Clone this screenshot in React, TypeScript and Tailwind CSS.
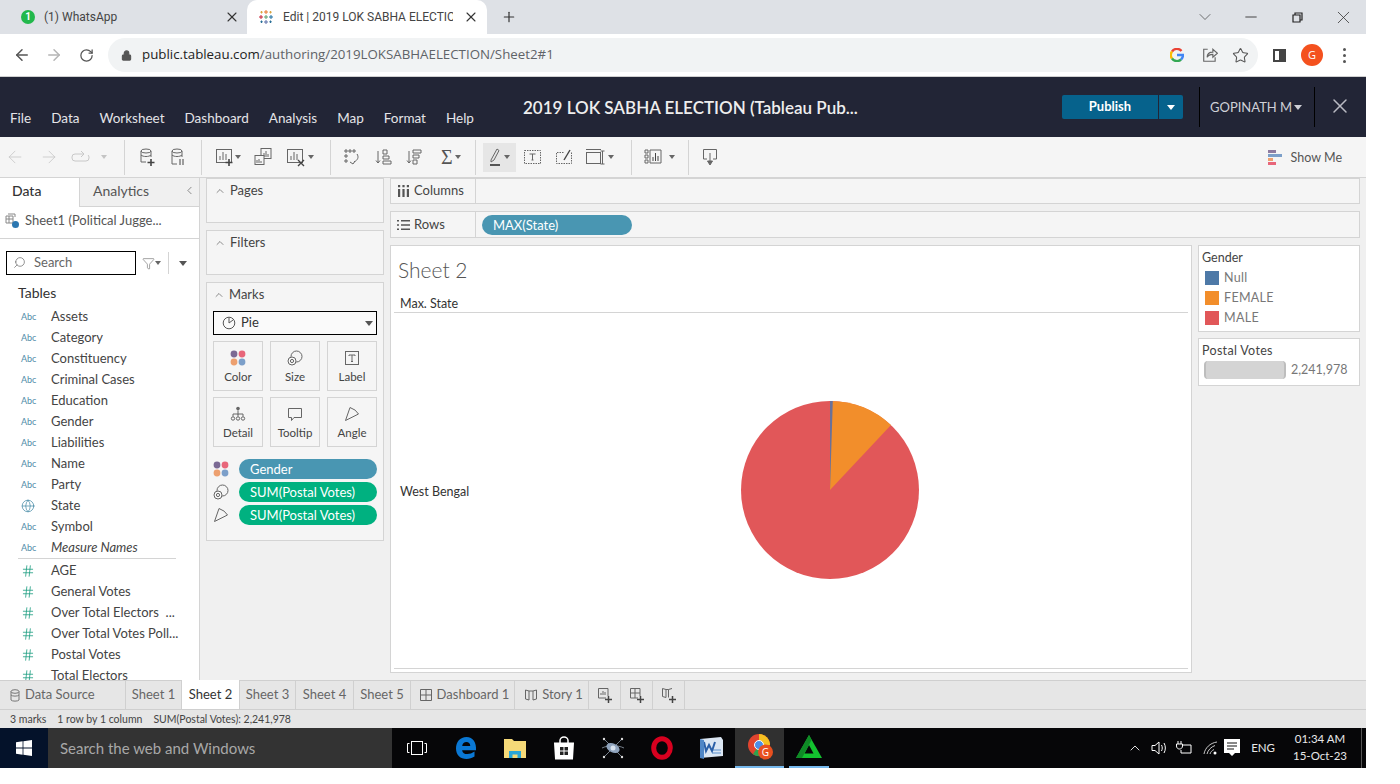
import React from "react";
import { ArrowLeft, ArrowRight, RotateCw, Lock, Plus, X, ChevronDown, Minus, Star, ChevronUp, ChevronLeft, Search, Filter, Globe, Hash } from "lucide-react";

const dims = ["Assets", "Category", "Constituency", "Criminal Cases", "Education", "Gender", "Liabilities", "Name", "Party", "State", "Symbol", "Measure Names"];
const measures = ["AGE", "General Votes", "Over Total Electors  ...", "Over Total Votes Poll...", "Postal Votes", "Total Electors"];
const menus = ["File", "Data", "Worksheet", "Dashboard", "Analysis", "Map", "Format", "Help"];

const Caret = ({ className = "" }: { className?: string }) => (
  <span className={`inline-block w-0 h-0 border-x-[3px] border-x-transparent border-t-[4px] border-t-[#666] ${className}`} />
);

const Sep = () => <div className="w-px h-[35px] bg-[#d4d4d4]" />;

const Dots = () => (
  <svg width="16" height="16" viewBox="0 0 16 16">
    <circle cx="4" cy="4" r="3.4" fill="#7b6a94" />
    <circle cx="12" cy="4" r="3.4" fill="#e8667a" />
    <circle cx="4" cy="12" r="3.4" fill="#eda06f" />
    <circle cx="12" cy="12" r="3.4" fill="#7c9fc9" />
  </svg>
);

const SizeIcon = () => (
  <svg width="16" height="16" viewBox="0 0 16 16" fill="none" stroke="#666" strokeWidth="1">
    <circle cx="9.5" cy="6.5" r="5.5" />
    <circle cx="5" cy="11" r="4" fill="#fafafa" />
    <circle cx="5" cy="11" r="1.6" />
  </svg>
);

const LabelIcon = () => (
  <svg width="16" height="16" viewBox="0 0 16 16" fill="none" stroke="#666">
    <rect x="1.5" y="1.5" width="13" height="13" />
    <path d="M5 5h6M8 5v6.5M7 11.5h2M5 5v1M11 5v1" />
  </svg>
);

const DetailIcon = () => (
  <svg width="16" height="16" viewBox="0 0 16 16" fill="none" stroke="#666">
    <circle cx="8" cy="2.6" r="1.8" fill="#666" stroke="none" />
    <path d="M8 4.5v4M3 10.5V8h10v2.5M8 8v2.5" />
    <circle cx="3" cy="12.5" r="1.7" />
    <circle cx="8" cy="12.5" r="1.7" />
    <circle cx="13" cy="12.5" r="1.7" />
  </svg>
);

const TooltipIcon = () => (
  <svg width="16" height="16" viewBox="0 0 16 16" fill="none" stroke="#666">
    <path d="M1.5 2.5h13v9H7L4.5 14.5v-3h-3z" />
  </svg>
);

const AngleIcon = () => (
  <svg width="16" height="16" viewBox="0 0 16 16" fill="none" stroke="#666">
    <path d="M1.5 14.5 6 1.5Q12 3.5 14.5 8Z" />
  </svg>
);

const PieIcon = () => (
  <svg width="14" height="14" viewBox="0 0 14 14" fill="none" stroke="#555">
    <circle cx="7" cy="7" r="5.8" />
    <path d="M7 7V1.5M7 7l4-3" />
  </svg>
);

// toolbar drawings, all on a 20px box
const T = ({ children, w = 20 }: { children: React.ReactNode; w?: number }) => (
  <svg width={w} height="20" viewBox={`0 0 ${w} 20`} fill="none" stroke="#666" strokeWidth="1">
    {children}
  </svg>
);

const Toolbar = () => (
  <div className="h-[40px] bg-[#f5f5f5] flex items-center text-[#666] shrink-0">
    <div className="w-[124px] flex items-center pl-[5px] text-[#c8c8c8]">
      <ArrowLeft size={20} strokeWidth={1} />
      <ArrowRight size={20} strokeWidth={1} className="ml-[14px]" />
      <svg width="20" height="14" viewBox="0 0 20 14" fill="none" stroke="#c8c8c8" className="ml-[12px]">
        <path d="M13 4H4a3 3 0 0 0-3 3v1a3 3 0 0 0 3 3h11a3 3 0 0 0 3-3V7a3 3 0 0 0-1-2M10 1l3 3-3 3" />
      </svg>
      <Caret className="ml-[10px] border-t-[#c4c4c4]" />
    </div>
    <Sep />
    <div className="w-[76px] flex items-center pl-[12px] gap-[11px]">
      <T>
        <ellipse cx="9" cy="4" rx="5" ry="2" />
        <path d="M4 4v11h5M14 4v6M4 8c2 2 8 2 10 0" />
        <path d="M14 12v7M10.5 15.5h7" stroke="#444" strokeWidth="1.6" />
      </T>
      <T>
        <ellipse cx="9" cy="4" rx="5" ry="2" />
        <path d="M4 4v13h5M14 4v6M4 8c2 2 8 2 10 0" />
        <path d="M12 12v6M15 12v6" stroke="#444" />
      </T>
    </div>
    <Sep />
    <div className="w-[128px] flex items-center pl-[13px]">
      <T>
        <rect x="1.5" y="2.5" width="15" height="13" />
        <path d="M5 13V9M8 13V5M11 13V7" />
        <path d="M14 12v7M10.5 15.5h7" stroke="#444" strokeWidth="1.6" />
      </T>
      <Caret />
      <span className="ml-[12px]" />
      <T>
        <rect x="8" y="1.5" width="10" height="10" />
        <path d="M11 10V6M13 10V4M15 10V7" />
        <rect x="2" y="8.5" width="9" height="9" fill="#f5f5f5" />
        <path d="M4 16v-3M6 16v-4M8 16v-2" />
      </T>
      <span className="ml-[13px]" />
      <T>
        <rect x="1.5" y="2.5" width="15" height="13" />
        <path d="M5 13V9M8 13V5M11 13V7" />
        <path d="M12 13l6 6M18 13l-6 6" stroke="#444" strokeWidth="1.4" />
      </T>
      <Caret className="ml-[2px]" />
    </div>
    <Sep />
    <div className="w-[144px] flex items-center pl-[11px]">
      <T>
        <path d="M3 3h2v2H3zM7 3h2v2H7zM11 3h2v2h-2zM3 8h2v2H3zM3 13h2v2H3zM15 7c2 3 1 6-3 8M8 15l3 2M13 14l-2 3" />
      </T>
      <span className="ml-[12px]" />
      <T>
        <path d="M4 4v12M2 13.5l2 2.5 2-2.5" />
        <path d="M9 3h4v4H9zM9 9h6v3H9zM9 14h8v3H9z" />
      </T>
      <span className="ml-[11px]" />
      <T>
        <path d="M4 16V4M2 13.5l2 2.5 2-2.5" />
        <path d="M8 3h8v3H8zM8 8h6v3H8zM8 13h4v4H8z" />
      </T>
      <span className="ml-[16px]" />
      <span className="text-[20px] leading-none font-['Liberation_Serif',serif] text-[#555]">Σ</span>
      <Caret className="ml-[2px]" />
    </div>
    <Sep />
    <div className="w-[155px] flex items-center pl-[7px]">
      <div className="w-[33px] h-[29px] bg-[#e6e6e6] flex items-center justify-center">
        <svg width="14" height="20" viewBox="0 0 14 20" fill="none" stroke="#666">
          <path d="M2 13 8 2l2 1.5-5 9.5-3 2z" />
          <path d="M1 18h10" stroke="#555" strokeWidth="2" />
        </svg>
        <Caret className="ml-[1px]" />
      </div>
      <span className="ml-[8px]" />
      <T w={18}>
        <rect x="0.5" y="3.5" width="16" height="13" strokeDasharray="1.5 1" />
        <path d="M5.5 7h6M8.5 7v6M7.5 13h2" />
      </T>
      <span className="ml-[14px]" />
      <T w={16}>
        <path d="M15.5 5.5v11h-15v-11h8" strokeDasharray="1.5 1" />
        <path d="M8 13 14 3" stroke="#444" strokeWidth="1.4" />
      </T>
      <span className="ml-[13px]" />
      <T>
        <rect x="1.5" y="5.5" width="14" height="11" />
        <path d="M1 2.5h15M17.5 4v13M15.5 4h4M15.5 17h4" />
      </T>
      <Caret className="ml-[3px]" />
    </div>
    <Sep />
    <div className="w-[56px] flex items-center pl-[11px]">
      <T>
        <path d="M2 3h3v3H2zM2 8h3v3H2zM2 13h3v3H2zM7 3h11v13H7z" />
        <path d="M10 14v-4M12.5 14V6M15 14V9" stroke="#444" />
      </T>
      <Caret className="ml-[6px]" />
    </div>
    <Sep />
    <div className="pl-[13px] flex items-center">
      <T w={16}>
        <path d="M5 12H1.5V2.5h13V12H11" />
        <path d="M8 6v10" />
        <path d="M5.5 14 8 18l2.5-4z" fill="#666" />
      </T>
    </div>
    <div className="ml-auto flex items-center pr-[24px] pt-[2px]">
      <svg width="14" height="16" viewBox="0 0 14 16" className="mr-[9px]">
        <rect x="0" y="0" width="8" height="3" fill="#8e7ba0" />
        <rect x="0" y="4" width="14" height="3" fill="#7c9fc9" />
        <rect x="0" y="8" width="5" height="3" fill="#eda06f" />
        <rect x="0" y="12" width="8" height="3" fill="#e8667a" />
      </svg>
      <span className="text-[12.5px] text-[#555]">Show Me</span>
    </div>
  </div>
);

const Card = ({ title, h }: { title: string; h: string }) => (
  <div className={`${h} border border-[#d4d4d4] bg-[#f5f5f5] pl-[7px] pt-[2px] flex items-start gap-[4px] text-[13px] text-[#444]`}>
    <ChevronUp size={12} strokeWidth={1.2} className="mt-[4px]" />
    <span>{title}</span>
  </div>
);

const MarkBtn = ({ icon, label }: { icon: React.ReactNode; label: string }) => (
  <div className="w-[50px] h-[50px] border border-[#d4d4d4] flex flex-col items-center pt-[8px] gap-[4px]">
    {icon}
    <span className="text-[11.5px] leading-[14px] text-[#444]">{label}</span>
  </div>
);

const Pill = ({ text, green }: { text: string; green?: boolean }) => (
  <div className={`h-[20px] w-[138px] rounded-full text-white text-[13px] leading-[20px] pl-[11px] ${green ? "bg-[#00b180]" : "bg-[#4996b2]"}`}>
    {text}
  </div>
);

const SideList = () => (
  <div className="w-[200px] bg-white border-r border-[#d4d4d4] flex flex-col shrink-0 overflow-hidden">
    <div className="h-[29px] flex shrink-0 text-[14px]">
      <div className="w-[79px] pl-[12px] leading-[25px] text-[#333] font-medium">Data</div>
      <div className="flex-1 bg-[#f0f0f0] border-l border-b border-[#d4d4d4] flex items-center pl-[13px] pb-[3px] text-[#555]">
        <span>Analytics</span>
        <ChevronLeft size={13} strokeWidth={1.2} className="ml-auto mr-[3px]" />
      </div>
    </div>
    <div className="h-[32px] border-b border-[#d4d4d4] flex items-center pl-[5px] pb-[4px] text-[13px] text-[#555] shrink-0">
      <svg width="16" height="16" viewBox="0 0 16 16" fill="none" stroke="#888" className="mr-[4px]">
        <path d="M1 3h7v7H1z" />
        <path d="M3 1h7v3M1 6h7M4 3v7" />
        <circle cx="10.5" cy="11.5" r="3.5" fill="#2c77b0" stroke="none" />
      </svg>
      Sheet1 (Political Jugge...
    </div>
    <div className="flex items-center pl-[6px] pt-[12px] shrink-0">
      <div className="w-[130px] h-[24px] border border-black flex items-center pl-[6px] pb-px text-[13px] text-[#666]">
        <Search size={13} strokeWidth={1.3} className="-scale-x-100" />
        <span className="ml-[8px]">Search</span>
      </div>
      <Filter size={13} strokeWidth={1} className="ml-[6px] text-[#555]" />
      <Caret />
      <div className="w-px h-[22px] bg-[#d4d4d4] ml-[7px]" />
      <span className="ml-[10px] inline-block w-0 h-0 border-x-[4px] border-x-transparent border-t-[5px] border-t-[#555]" />
    </div>
    <div className="pl-[18px] pt-[8px] text-[14px] leading-[20px] text-[#333] shrink-0">Tables</div>
    <div className="pt-[3px] shrink-0">
      {dims.map((d) => (
        <div key={d} className="h-[21px] flex items-center text-[13px] text-[#444]">
          <span className="w-[51px] pl-[21px] flex items-center">
            {d === "State" ? (
              <Globe size={14} strokeWidth={1.2} className="text-[#3f86a3]" />
            ) : (
              <span className="text-[9px] text-[#4e8ca8]">Abc</span>
            )}
          </span>
          <span className={d === "Measure Names" ? "italic" : ""}>{d}</span>
        </div>
      ))}
      <div className="ml-[18px] w-[158px] h-px bg-[#d4d4d4] mb-px" />
      {measures.map((d) => (
        <div key={d} className="h-[21px] flex items-center text-[13px] text-[#444] whitespace-pre">
          <span className="w-[51px] pl-[21px] flex items-center">
            <Hash size={14} strokeWidth={1.4} className="text-[#1f9e82]" />
          </span>
          {d}
        </div>
      ))}
    </div>
  </div>
);

const Panels = () => (
  <div className="w-[190px] bg-[#f0f0f0] pl-[6px] pr-[6px] flex flex-col gap-[7px] shrink-0">
    <Card title="Pages" h="h-[45px]" />
    <Card title="Filters" h="h-[45px]" />
    <div className="h-[259px] border border-[#d4d4d4] bg-[#f5f5f5] px-[6px]">
      <div className="h-[28px] flex items-center gap-[4px] pb-[5px] text-[13px] text-[#444]">
        <ChevronUp size={12} strokeWidth={1.2} />
        Marks
      </div>
      <div className="h-[24px] border border-black flex items-center pl-[8px] text-[13px] text-[#333] bg-[#fafafa]">
        <PieIcon />
        <span className="ml-[5px]">Pie</span>
        <span className="ml-auto mr-[3px] inline-block w-0 h-0 border-x-[4px] border-x-transparent border-t-[5px] border-t-[#555]" />
      </div>
      <div className="grid grid-cols-[50px_50px_50px] gap-x-[7px] gap-y-[6px] mt-[6px]">
        <MarkBtn icon={<Dots />} label="Color" />
        <MarkBtn icon={<SizeIcon />} label="Size" />
        <MarkBtn icon={<LabelIcon />} label="Label" />
        <MarkBtn icon={<DetailIcon />} label="Detail" />
        <MarkBtn icon={<TooltipIcon />} label="Tooltip" />
        <MarkBtn icon={<AngleIcon />} label="Angle" />
      </div>
      <div className="mt-[12px] flex flex-col gap-[3px]">
        {[
          { icon: <Dots />, text: "Gender", green: false },
          { icon: <SizeIcon />, text: "SUM(Postal Votes)", green: true },
          { icon: <AngleIcon />, text: "SUM(Postal Votes)", green: true },
        ].map((p, i) => (
          <div key={i} className="flex items-center justify-between">
            {p.icon}
            <Pill text={p.text} green={p.green} />
          </div>
        ))}
      </div>
    </div>
  </div>
);

const Shelf = ({ icon, label, h, pad = "", children }: { icon: React.ReactNode; label: string; h: string; pad?: string; children?: React.ReactNode }) => (
  <div className={`${h} border border-[#d4d4d4] bg-[#f5f5f5] flex items-center text-[13px] text-[#444]`}>
    <div className={`w-[85px] h-full border-r border-[#d4d4d4] flex items-center gap-[4px] pl-[6px] shrink-0 ${pad}`}>
      {icon}
      {label}
    </div>
    {children}
  </div>
);

const Viewer = () => (
  <div className="flex-1 flex flex-col bg-[#f0f0f0] pr-[6px] min-w-0">
    <div className="flex flex-col gap-[7px]">
      <Shelf
        h="h-[26px]"
        pad="pb-px"
        label="Columns"
        icon={
          <svg width="13" height="12" viewBox="0 0 13 12" fill="#555">
            <path d="M1 4h2.2v8H1zM5.4 4h2.2v8H5.4zM9.8 4H12v8H9.8zM1 0h2.2v2.2H1zM5.4 0h2.2v2.2H5.4zM9.8 0H12v2.2H9.8z" />
          </svg>
        }
      />
      <Shelf
        h="h-[27px]"
        label="Rows"
        icon={
          <svg width="13" height="12" viewBox="0 0 13 12" fill="#555">
            <path d="M0 1h2v1.6H0zM4 1h9v1.6H4zM0 5.2h2v1.6H0zM4 5.2h9v1.6H4zM0 9.4h2V11H0zM4 9.4h9V11H4z" />
          </svg>
        }
      >
        <div className="ml-[6px] w-[150px] h-[20px] rounded-full bg-[#4996b2] text-white leading-[20px] pl-[11px]">MAX(State)</div>
      </Shelf>
    </div>
    <div className="flex gap-[6px] mt-[7px]">
      <div className="w-[802px] h-[428px] bg-white border border-[#d4d4d4] flex flex-col px-[3px]">
        <div className="text-[21px] leading-[27px] font-light text-[#555] pl-[4px] pt-[10px] h-[38px]">Sheet 2</div>
        <div className="h-[29px] border-b border-[#d4d4d4] pl-[6px] pt-[11px] text-[12.5px] leading-[17px] text-[#333]">Max. State</div>
        <div className="flex-1 flex items-center relative border-b border-[#d4d4d4] mb-[3px]">
          <span className="pl-[6px] pt-[3px] text-[12.5px] text-[#333] w-[346px] shrink-0">West Bengal</span>
          <svg width="180" height="180" viewBox="-90 -90 180 180" className="shrink-0 -mt-[1px]">
            <circle r="89" fill="#e15759" />
            <path d="M0 0L0 -89A89 89 0 0 1 61 -65Z" fill="#f28e2b" />
            <path d="M0 0L0 -89A89 89 0 0 1 2.8 -89Z" fill="#6a7199" />
          </svg>
        </div>
      </div>
      <div className="w-[162px] flex flex-col gap-[6px] shrink-0">
        <div className="h-[87px] bg-white border border-[#d4d4d4] pl-[3px] pt-[3px] text-[12.5px] text-[#444]">
          <div className="leading-[17px]">Gender</div>
          <div className="mt-[2px] flex flex-col text-[#777] tracking-wide">
            {[
              { c: "bg-[#4e79a7]", t: "Null" },
              { c: "bg-[#f28e2b]", t: "FEMALE" },
              { c: "bg-[#e15759]", t: "MALE" },
            ].map((l) => (
              <div key={l.t} className="h-[20px] flex items-center pl-[3px]">
                <span className={`w-[14px] h-[14px] ${l.c}`} />
                <span className="ml-[5px]">{l.t}</span>
              </div>
            ))}
          </div>
        </div>
        <div className="h-[48px] bg-white border border-[#d4d4d4] pl-[3px] pt-[3px] text-[12.5px] text-[#444]">
          <div className="leading-[17px] tracking-wide">Postal Votes</div>
          <div className="flex items-center pl-[2px] mt-[2px]">
            <span className="w-[82px] h-[18px] bg-[#d4d4d4] rounded-[4px] border-x-2 border-[#bdbdbd]" />
            <span className="ml-[5px] text-[#777]">2,241,978</span>
          </div>
        </div>
      </div>
    </div>
  </div>
);

const sheetTabs = [
  { t: "Sheet 1", w: "w-[56px]" },
  { t: "Sheet 2", w: "w-[58px]", on: true },
  { t: "Sheet 3", w: "w-[56px]" },
  { t: "Sheet 4", w: "w-[58px]" },
  { t: "Sheet 5", w: "w-[57px]" },
];

const BottomTabs = () => (
  <div className="h-[30px] bg-[#e6e6e6] border-y border-[#cfcfcf] flex text-[13px] text-[#666] shrink-0">
    <div className="w-[126px] border-r border-[#d0d0d0] flex items-center pl-[10px] gap-[5px]">
      <svg width="10" height="13" viewBox="0 0 10 13" fill="none" stroke="#777">
        <ellipse cx="5" cy="2.5" rx="4" ry="1.8" />
        <path d="M1 2.5V11c1 1.5 7 1.5 8 0V2.5M1 6c1 1.5 7 1.5 8 0" />
      </svg>
      Data Source
    </div>
    {sheetTabs.map((s) => (
      <div key={s.t} className={`${s.w} border-r border-[#d0d0d0] flex items-center justify-center ${s.on ? "bg-white text-[#333] -mt-px" : ""}`}>
        {s.t}
      </div>
    ))}
    <div className="w-[104px] border-r border-[#d0d0d0] flex items-center justify-center gap-[5px] pl-[4px]">
      <svg width="12" height="12" viewBox="0 0 12 12" fill="none" stroke="#666">
        <path d="M.5.5h11v11H.5zM6 .5v11M.5 6h11" />
      </svg>
      Dashboard 1
    </div>
    <div className="w-[74px] border-r border-[#d0d0d0] flex items-center justify-center gap-[5px] pl-[5px]">
      <svg width="12" height="12" viewBox="0 0 12 12" fill="none" stroke="#666">
        <path d="M.5 1 4 2v9L.5 10zM11.5 1 8 2v9l3.5-1zM4 2h4" />
      </svg>
      Story 1
    </div>
    <div className="w-[32px] border-r border-[#d0d0d0] flex items-center justify-center">
      <svg width="16" height="16" viewBox="0 0 16 16" fill="none" stroke="#666">
        <path d="M9 11H1.5V1.5H11V9M4 8V6M6 8V4M8 8V5" />
        <path d="M11.5 9v7M8 12.5h7" stroke="#444" strokeWidth="1.5" />
      </svg>
    </div>
    <div className="w-[32px] border-r border-[#d0d0d0] flex items-center justify-center">
      <svg width="16" height="16" viewBox="0 0 16 16" fill="none" stroke="#666">
        <path d="M9 11H1.5V1.5H11V9M6 1.5V11M1.5 6H11" />
        <path d="M11.5 9v7M8 12.5h7" stroke="#444" strokeWidth="1.5" />
      </svg>
    </div>
    <div className="w-[32px] border-r border-[#d0d0d0] flex items-center justify-center">
      <svg width="16" height="16" viewBox="0 0 16 16" fill="none" stroke="#666">
        <path d="M1.5 1.5 5 2.5v8l-3.5-1zM11 1.5 7.5 2.5v8M5 2.5h2.5" />
        <path d="M11.5 9v7M8 12.5h7" stroke="#444" strokeWidth="1.5" />
      </svg>
    </div>
  </div>
);

const Taskbar = () => (
  <div className="h-[40px] bg-[#060608] flex items-center text-white shrink-0 relative overflow-hidden">
    <div className="w-[48px] h-full bg-[#04122a] flex items-center justify-center">
      <svg width="16" height="16" viewBox="0 0 16 16" fill="#fff">
        <path d="M0 2.3 6.6 1.3V7.6H0zM7.4 1.2 16 0V7.6H7.4zM0 8.4H6.6V14.7L0 13.7zM7.4 8.4H16V16L7.4 14.8z" />
      </svg>
    </div>
    <div className="w-[344px] h-full bg-[#333] flex items-center pl-[12px] text-[15px] text-[#a8a8a8]">Search the web and Windows</div>
    <div className="flex items-center h-full">
      <div className="w-[49px] flex justify-center">
        <svg width="20" height="14" viewBox="0 0 20 14" fill="none" stroke="#fff">
          <rect x="4.5" y="0.5" width="11" height="13" />
          <path d="M2.5 2.5H.5v9h2M17.5 2.5h2v9h-2" />
        </svg>
      </div>
      <div className="w-[49px] flex justify-center">
        <svg width="22" height="24" viewBox="0 0 22 24">
          <path d="M11.5 1C5 1 1 6 1 12.5 1 19 5.5 23 11.5 23c3 0 5.5-.8 8-2.4v-5c-2.3 1.7-4.8 2.5-7.2 2.5-2.8 0-4.8-1.3-5.2-3.900H21c.6-7.5-3-13.200-9.5-13.200zM7.200 10c.3-2.400 2-3.900 4.200-3.900S15.200 7.600 15.300 10z" fill="#0a78d4" />
        </svg>
      </div>
      <div className="w-[49px] flex justify-center">
        <svg width="22" height="20" viewBox="0 0 22 20">
          <path d="M0 1h8l2 2h12v17H0z" fill="#f5d978" />
          <path d="M5 20v-7h12v7h-3.5v-3.5h-5V20z" fill="#2aa6d8" />
        </svg>
      </div>
      <div className="w-[49px] flex justify-center">
        <svg width="22" height="24" viewBox="0 0 22 24">
          <path d="M7 7V4.5C7 2.5 8.8 1 11 1s4 1.5 4 3.5V7" fill="none" stroke="#fff" strokeWidth="1.5" />
          <path d="M1 6.5h20l-1 17H2z" fill="#fff" />
          <path d="M7 11h3.5v3.5H7zM11.5 11H15v3.5h-3.5zM7 15.5h3.5V19H7zM11.5 15.5H15V19h-3.5z" fill="#222" />
        </svg>
      </div>
      <div className="w-[49px] flex justify-center">
        <svg width="24" height="22" viewBox="0 0 24 22" stroke="#a8b4c4" fill="none">
          <path d="M3 2l18 18M21 2 3 20M1 11c6-3 16-3 22 0" strokeWidth="0.7" />
          <ellipse cx="12" cy="11" rx="7" ry="4.5" fill="#8fa3bd" stroke="none" transform="rotate(25 12 11)" />
          <circle cx="12" cy="11" r="2.5" fill="#d8e2ee" stroke="none" />
          <circle cx="3" cy="2" r="1.2" fill="#ddd" stroke="none" />
          <circle cx="21" cy="2" r="1.2" fill="#ddd" stroke="none" />
          <circle cx="3" cy="20" r="1.2" fill="#ddd" stroke="none" />
          <circle cx="21" cy="20" r="1.2" fill="#ddd" stroke="none" />
        </svg>
      </div>
      <div className="w-[49px] flex justify-center">
        <svg width="24" height="24" viewBox="0 0 24 24">
          <ellipse cx="12" cy="12" rx="8.3" ry="9.3" fill="none" stroke="#d8001f" strokeWidth="5" />
        </svg>
      </div>
      <div className="w-[49px] flex justify-center">
        <svg width="24" height="24" viewBox="0 0 24 24">
          <path d="M1 3 22 1l2 3v16L1 22z" fill="#dbe6f3" />
          <path d="M13 14h9M13 17h9" stroke="#5b8fcb" />
          <path d="M5 6l2 9 3-6 3 6 3-9" fill="none" stroke="#2a5fa8" strokeWidth="2" />
          <path d="M1 3v19l4 1V4z" fill="#4f86c6" />
        </svg>
      </div>
      <div className="w-[49px] h-full bg-[#303030] border-b-[2px] border-[#76b9ed] flex justify-center items-center">
        <svg width="26" height="28" viewBox="0 0 26 28">
          <circle cx="12" cy="12" r="11" fill="#e0442f" />
          <path d="M12 12 22 17.5A11 11 0 0 1 6 21.3z" fill="#2fa24f" />
          <path d="M12 1A11 11 0 0 1 23 12H12z" fill="#f5c021" />
          <circle cx="12" cy="12" r="4.5" fill="#4a8de8" stroke="#fff" />
          <circle cx="18.5" cy="19" r="7.5" fill="#e8501f" />
          <text x="18.5" y="22.5" fontSize="10" fill="#fff" textAnchor="middle" fontFamily="Open Sans">G</text>
        </svg>
      </div>
      <div className="w-[40px] h-full ml-[5px] border-b-[2px] border-[#76b9ed] flex justify-center items-center">
        <svg width="26" height="26" viewBox="0 0 26 26">
          <path d="M13 1 26 24H0z" fill="#13c22f" />
          <path d="M13 11 17.5 19.5H8.5z" fill="#060608" />
          <path d="M13 1 15.5 6 6 24H0z" fill="#0f8a26" />
        </svg>
      </div>
    </div>
    <div className="ml-auto flex items-center h-full pr-[14px]">
      <ChevronUp size={16} strokeWidth={1.3} className="text-white mr-[8px]" />
      <svg width="18" height="16" viewBox="0 0 18 16" fill="none" stroke="#fff" className="mr-[7px]">
        <path d="M1 5.5h3L8 2v12l-4-3.5H1z" />
        <path d="M10.5 5c1 2 1 4 0 6M13 3c1.8 3 1.8 7 0 10" />
      </svg>
      <svg width="16" height="14" viewBox="0 0 16 14" fill="none" stroke="#fff" className="mr-[11px]">
        <path d="M6 4h9v8H5V9M2 0v3M5 0v3M.5 3h6v2c0 2-1.5 3-3 3S.5 7 .5 5z" />
      </svg>
      <svg width="16" height="14" viewBox="0 0 16 14" fill="none" stroke="#c8c8c8" className="mr-[5px]">
        <path d="M1 13C2 7 7 2 14 1M4 13c1-4 4-7 8-8.5M7 13c.5-2 2-3.5 4-4.5" />
        <circle cx="12" cy="12" r="1.5" fill="#fff" stroke="none" />
      </svg>
      <svg width="16" height="20" viewBox="0 0 16 20" className="mr-[11px]">
        <path d="M0 1h16v14h-5l-3 3-3-3H0z" fill="#fff" />
        <path d="M3 5h10M3 8h10M3 11h7" stroke="#111" />
      </svg>
      <span className="text-[11.5px] text-[#e8e8e8] mr-[18px]">ENG</span>
      <div className="text-[11.5px] leading-[17px] text-[#e8e8e8] text-center pb-[2px]">
        <div>01:34 AM</div>
        <div>15-Oct-23</div>
      </div>
    </div>
    <div className="w-px h-full bg-[#555] mr-[4px]" />
  </div>
);

const App = () => {
  return (
    <div className="w-[1400px] h-[784px] bg-white overflow-hidden font-['Lato','Open_Sans',sans-serif]">
      <div className="w-[1366px] h-[768px] flex flex-col">
        {/* chrome tabs */}
        <div className="h-[34px] bg-[#dee1e6] flex items-center text-[12px] font-['Roboto',sans-serif] text-[#444] shrink-0">
          <div className="w-[247px] h-[34px] flex items-center pl-[21px] shrink-0">
            <span className="w-[14px] h-[14px] rounded-full bg-[#22b84c] text-white text-[10px] leading-[14px] text-center font-bold">1</span>
            <span className="ml-[9px]">(1) WhatsApp</span>
            <X size={16} strokeWidth={1.6} className="ml-auto mr-[7px] text-[#333]" />
          </div>
          <div className="w-[240px] h-[34px] bg-white rounded-t-[10px] flex items-center pl-[11px] shrink-0">
            <svg width="16" height="16" viewBox="0 0 16 16" strokeWidth="1">
              <path d="M8 1v4M6 3h4" stroke="#e8762d" />
              <path d="M8 11v4M6 13h4" stroke="#5b6fa8" />
              <path d="M3 6v4M1 8h4" stroke="#c72037" />
              <path d="M13 6v4M11 8h4" stroke="#1f6f9f" />
              <path d="M8 6v4M6 8h4" stroke="#5a9e6f" />
              <path d="M3.5 2v2.5M2.3 3.2h2.5M12.5 2v2.5M11.3 3.2h2.5" stroke="#d9a441" />
              <path d="M3.5 11.5V14M2.3 12.8h2.5M12.5 11.5V14M11.3 12.8h2.5" stroke="#2a6f97" />
            </svg>
            <span className="ml-[9px] w-[170px] overflow-hidden whitespace-nowrap">Edit | 2019 LOK SABHA ELECTION</span>
            <X size={16} strokeWidth={1.6} className="ml-[10px] text-[#333]" />
          </div>
          <Plus size={16} strokeWidth={1.8} className="ml-[14px] text-[#333]" />
          <div className="ml-auto flex items-center h-[34px] text-[#333]">
            <span className="w-[46px] flex justify-center">
              <ChevronDown size={20} strokeWidth={0.8} />
            </span>
            <span className="w-[46px] flex justify-center">
              <Minus size={18} strokeWidth={1.2} />
            </span>
            <span className="w-[46px] flex justify-center">
              <svg width="11" height="11" viewBox="0 0 11 11" fill="none" stroke="#222" strokeWidth="1.2">
                <path d="M3 3V1h7v7H8M1 3h7v7H1z" />
              </svg>
            </span>
            <span className="w-[46px] flex justify-center">
              <X size={21} strokeWidth={0.9} />
            </span>
          </div>
        </div>
        {/* address bar */}
        <div className="h-[43px] bg-white border-b border-[#d0d0d0] flex items-center shrink-0 font-['Open_Sans',sans-serif]">
          <ArrowLeft size={18} strokeWidth={2} className="ml-[13px] text-[#555]" />
          <ArrowRight size={18} strokeWidth={2} className="ml-[14px] text-[#b5b5b5]" />
          <RotateCw size={15} strokeWidth={2} className="ml-[16px] text-[#555]" />
          <div className="ml-[14px] w-[1150px] h-[34px] rounded-full bg-[#f1f3f4] flex items-center pl-[13px] text-[13.3px]">
            <Lock size={11} strokeWidth={2.4} className="text-[#555] fill-[#555]" />
            <span className="ml-[10px] text-[#222]">public.tableau.com</span>
            <span className="text-[#5f6368]">/authoring/2019LOKSABHAELECTION/Sheet2#1</span>
            <div className="ml-auto flex items-center pr-[9px]">
              <svg width="14" height="14" viewBox="0 0 14 14" fill="none" strokeWidth="2.4" className="mr-[18px]">
                <path d="M11.5 3A6 6 0 0 0 2 3.5" stroke="#ea4335" />
                <path d="M2 3.5a6 6 0 0 0 0 7" stroke="#fbbc05" />
                <path d="M2 10.5a6 6 0 0 0 9 1" stroke="#34a853" />
                <path d="M7 7h6a6 6 0 0 1-2 4.5" stroke="#4285f4" />
              </svg>
              <svg width="16" height="16" viewBox="0 0 14 14" fill="none" stroke="#666" className="mr-[14px]">
                <path d="M5 2H1.5v10.5h10V9" />
                <path d="M4.5 9c0-3 2-4.5 5-4.500V2L13.500 5.500l-4 3.500V6.500c-2 0-4 .5-5 2.500z" />
              </svg>
              <Star size={17} strokeWidth={1.5} className="text-[#555]" />
            </div>
          </div>
          <div className="ml-[15px] w-[13px] h-[13px] border-2 border-[#444] flex justify-end">
            <span className="w-[5px] h-full bg-[#444]" />
          </div>
          <span className="ml-[15px] w-[22px] h-[22px] rounded-full bg-[#f4511e] text-white text-[11px] leading-[22px] text-center">G</span>
          <div className="ml-[20px] flex flex-col gap-[3px]">
            <span className="w-[3px] h-[3px] rounded-full bg-[#555]" />
            <span className="w-[3px] h-[3px] rounded-full bg-[#555]" />
            <span className="w-[3px] h-[3px] rounded-full bg-[#555]" />
          </div>
        </div>
        {/* tableau header */}
        <div className="h-[60px] bg-[#222536] flex text-[#e4e4e8] shrink-0">
          <div className="flex items-end pl-[10px] pb-[10px] gap-[20px] text-[13.5px] leading-[18px] w-[490px] shrink-0">
            {menus.map((m) => (
              <span key={m}>{m}</span>
            ))}
          </div>
          <div className="pl-[33px] pt-[20px] text-[17px] leading-[22px] font-semibold text-[#eee] whitespace-nowrap w-[572px] shrink-0">
            2019 LOK SABHA ELECTION (Tableau Pub...
          </div>
          <div className="mt-[18px] h-[24px] flex shrink-0">
            <div className="w-[96px] bg-[#06628c] rounded-l-[2px] text-white text-[13px] font-bold leading-[23px] text-center">Publish</div>
            <div className="w-[25px] bg-[#06628c] border-l border-[#222536] rounded-r-[2px] flex items-center justify-center">
              <span className="inline-block w-0 h-0 border-x-[4px] border-x-transparent border-t-[5px] border-t-white" />
            </div>
          </div>
          <div className="ml-[16px] mt-[10px] h-[40px] w-px bg-black" />
          <div className="w-[85px] pl-[10px] pt-[21px] flex items-start whitespace-nowrap text-[13px] leading-[18px] text-[#cfd0d6] shrink-0">
            GOPINATH M
            <span className="inline-block ml-[2px] mt-[7px] w-0 h-0 border-x-[4px] border-x-transparent border-t-[5px] border-t-[#cfd0d6]" />
          </div>
          <div className="ml-[29px] mt-[10px] h-[40px] w-px bg-black" />
          <X size={24} strokeWidth={1.5} className="ml-[13px] mt-[17px] text-[#b9bac2]" />
        </div>
        <Toolbar />
        {/* main area */}
        <div className="h-[503px] flex overflow-hidden border-t border-[#d4d4d4] shrink-0">
          <SideList />
          <Panels />
          <Viewer />
        </div>
        <BottomTabs />
        <div className="h-[18px] bg-[#e6e6e6] flex items-center pl-[10px] pt-px gap-[11px] text-[10.5px] text-[#444] shrink-0">
          <span>3 marks</span>
          <span>1 row by 1 column</span>
          <span>SUM(Postal Votes): 2,241,978</span>
        </div>
        <Taskbar />
      </div>
    </div>
  );
};

export default App;
